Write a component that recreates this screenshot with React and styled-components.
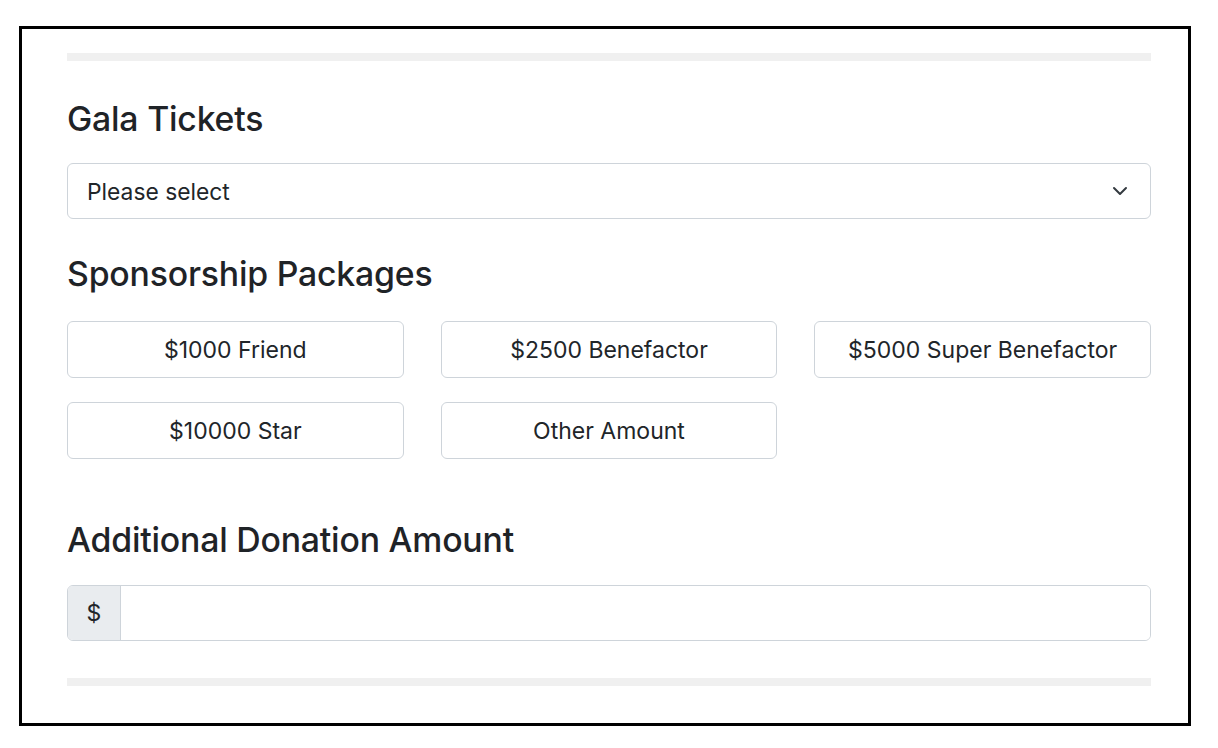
import styled, { createGlobalStyle } from "styled-components";

const GlobalStyle = createGlobalStyle`
  html, body {
    margin: 0;
    padding: 0;
    background: #fff;
  }
  body {
    font-family: Inter, "Liberation Sans", sans-serif;
    color: #212529;
  }
`;

const Frame = styled.div`
  box-sizing: border-box;
  margin: 26px 0 0 19px;
  width: 1172px;
  height: 700px;
  border: 3px solid #000;
  padding: 24px 37px 0 45px;
`;

const Rule = styled.div`
  height: 8px;
  background: #f0f0f0;
  margin-top: ${(p) => p.$top || 0}px;
`;

const Heading = styled.h4`
  margin: ${(p) => p.$top}px 0 ${(p) => p.$bottom}px;
  font-size: 33.8px;
  line-height: 40px;
  font-weight: 500;
  letter-spacing: -0.2px;
  color: #1f2327;
`;

const SelectBox = styled.div`
  box-sizing: border-box;
  height: 56px;
  border: 1px solid #ced4da;
  border-radius: 6px;
  display: flex;
  align-items: center;
  justify-content: space-between;
  padding: 0 22px 0 19px;
  font-size: 22.8px;
  color: #212529;
`;

const Grid = styled.div`
  display: grid;
  grid-template-columns: repeat(3, 1fr);
  column-gap: 37px;
  row-gap: 24px;
`;

const PackageButton = styled.button`
  box-sizing: border-box;
  height: 57px;
  border: 1px solid #ced4da;
  border-radius: 6px;
  background: #fff;
  font-family: inherit;
  font-size: 23px;
  color: #212529;
  cursor: pointer;
`;

const InputGroup = styled.div`
  box-sizing: border-box;
  display: flex;
  height: 56px;
  border: 1px solid #ced4da;
  border-radius: 6px;
  overflow: hidden;
`;

const Addon = styled.span`
  width: 52px;
  display: flex;
  align-items: center;
  justify-content: center;
  background: #e9ecef;
  border-right: 1px solid #ced4da;
  font-size: 23px;
`;

const Input = styled.input`
  flex: 1;
  border: 0;
  outline: none;
  font-family: inherit;
  font-size: 23px;
`;

const Chevron = () => (
  <svg width="16" height="16" viewBox="0 0 16 16">
    <path
      d="M2 5l6 6 6-6"
      fill="none"
      stroke="#343a40"
      strokeWidth="2"
      strokeLinecap="round"
      strokeLinejoin="round"
    />
  </svg>
);

const packages = [
  "$1000 Friend",
  "$2500 Benefactor",
  "$5000 Super Benefactor",
  "$10000 Star",
  "Other Amount",
];

export default function App() {
  return (
    <>
      <GlobalStyle />
      <Frame>
        <Rule />
        <Heading $top={38} $bottom={24}>Gala Tickets</Heading>
        <SelectBox>
          <span>Please select</span>
          <Chevron />
        </SelectBox>
        <Heading $top={35} $bottom={27}>Sponsorship Packages</Heading>
        <Grid>
          {packages.map((name) => (
            <PackageButton key={name}>{name}</PackageButton>
          ))}
        </Grid>
        <Heading $top={61} $bottom={25}>Additional Donation Amount</Heading>
        <InputGroup>
          <Addon>$</Addon>
          <Input type="text" />
        </InputGroup>
        <Rule $top={37} />
      </Frame>
    </>
  );
}
